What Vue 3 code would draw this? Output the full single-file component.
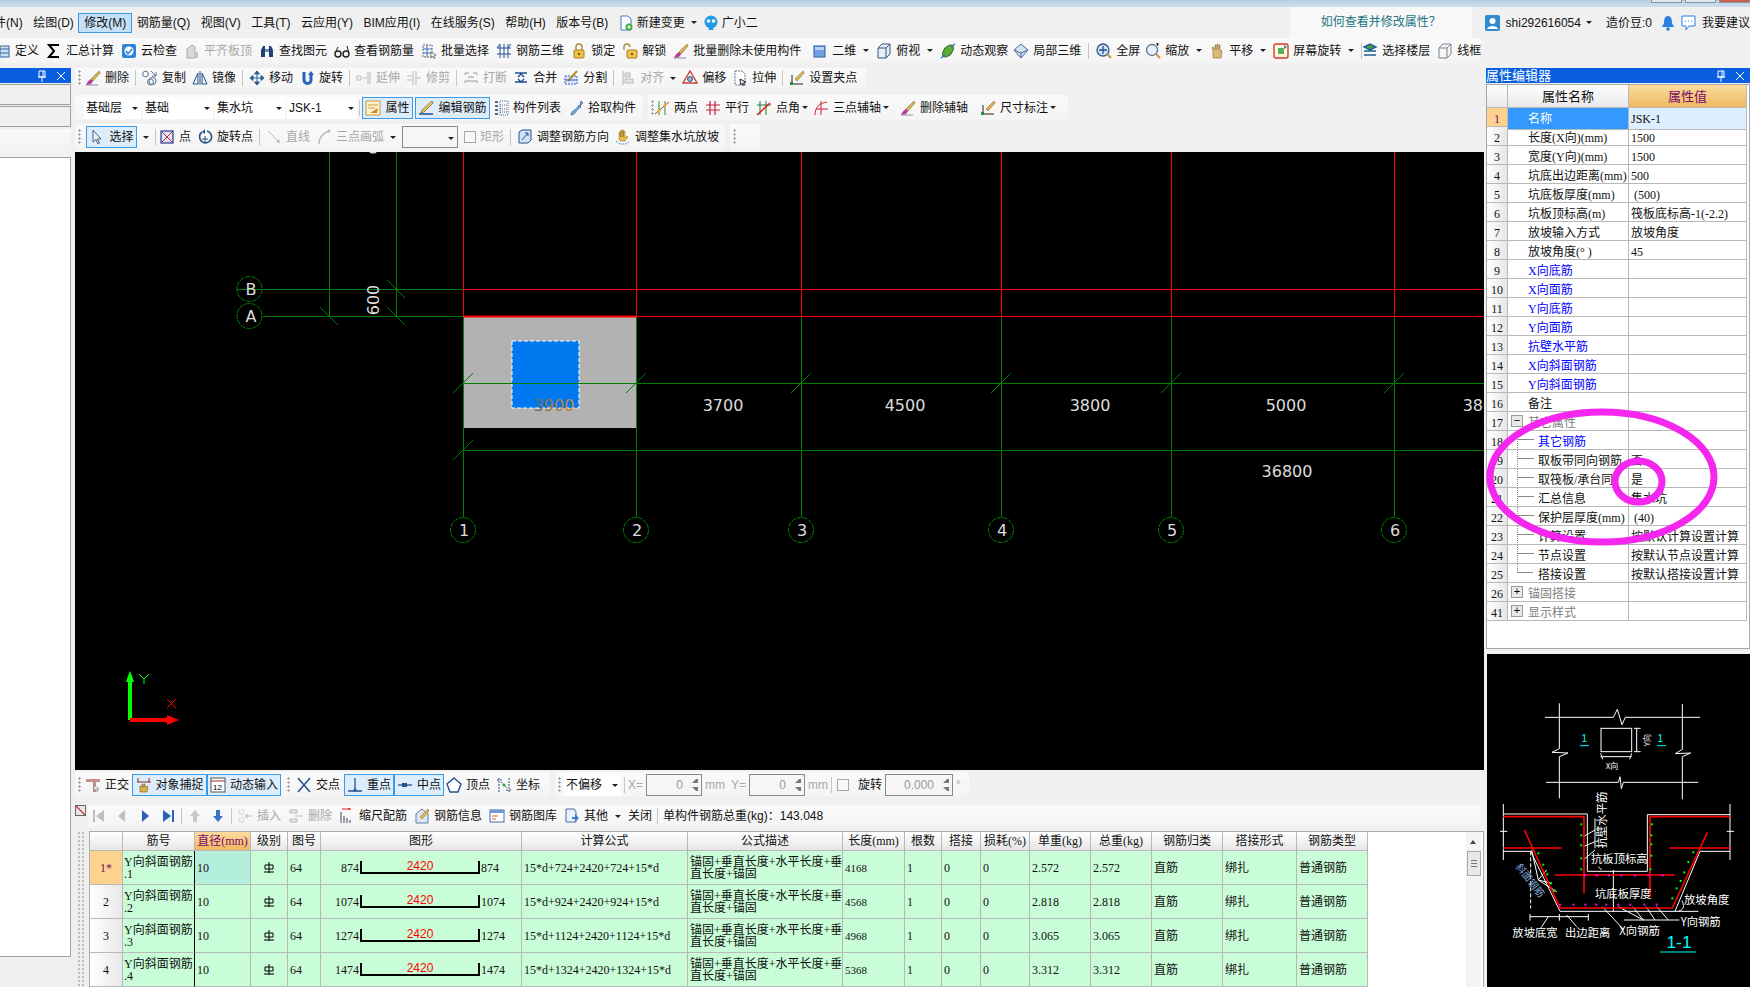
<script setup>
// glodon-style rebar editor: toolbars, cad canvas, property grid, rebar table
const icons = {
  doc: '<path d="M3 1h7l3 3v11H3z" fill="#fff" stroke="#3a7bc8"/><circle cx="11" cy="12" r="3.5" fill="#3fae3f"/><path d="M9 12h4M11 10v4" stroke="#fff"/>',
  bot: '<circle cx="8" cy="7" r="6.5" fill="#1f9be8"/><circle cx="5.5" cy="6" r="1.8" fill="#fff"/><circle cx="10.5" cy="6" r="1.8" fill="#fff"/><path d="M5 15h6l-3-4z" fill="#1f9be8"/>',
  define: '<rect x="1" y="3" width="13" height="11" fill="#cfe0f2" stroke="#35699f"/><path d="M1 6h13M5 3v11M1 10h13" stroke="#35699f"/>',
  sigma: '<path d="M13 2H3l5 6-5 6h10" fill="none" stroke="#000" stroke-width="2"/>',
  check: '<rect x="1" y="1" width="14" height="14" rx="2" fill="#2b86d8"/><circle cx="8" cy="8" r="4.5" fill="#fff"/><path d="M5 8l2 3 4-5" fill="none" stroke="#2b86d8" stroke-width="1.6"/>',
  level: '<path d="M3 15V6l5-4 3 2v11z" fill="#d8d8d8" stroke="#a8a8a8"/><path d="M10 15V9h4v6z" fill="#c4c4c4"/>',
  binoc: '<path d="M2 14V7l2-4h2v11zM10 14V3h2l2 4v7z" fill="#223f70"/><path d="M6 6h4v3H6z" fill="#6f89b0"/>',
  glasses: '<circle cx="4" cy="11" r="3" fill="none" stroke="#222" stroke-width="1.4"/><circle cx="12" cy="11" r="3" fill="none" stroke="#222" stroke-width="1.4"/><path d="M1 10l3-6M15 10l-2-7" stroke="#222"/>',
  batch: '<path d="M2 2h9v12H2z" fill="none" stroke="#667" stroke-dasharray="2 1"/><path d="M2 6h9M2 10h9M6 2v12" stroke="#3a6fb0"/><path d="M10 9l5 3-2 1 1 2-1 .5-1-2-2 1z" fill="#fff" stroke="#333" stroke-width=".6"/>',
  bars3d: '<path d="M1 5h14M1 11h14M4 1v14M8 1v14M12 1v14" stroke="#27518f"/><path d="M1 5l3-4M12 5l3-4" stroke="#27518f"/>',
  lock: '<path d="M5 7V4a3 3 0 016 0v3" fill="none" stroke="#a88a3c" stroke-width="1.4"/><rect x="3" y="7" width="10" height="8" rx="1" fill="#f0c24a" stroke="#a57c1e"/><circle cx="8" cy="11" r="1.2" fill="#7a5a10"/>',
  unlock: '<path d="M2 7V4a3 3 0 016 0" fill="none" stroke="#a88a3c" stroke-width="1.4"/><rect x="5" y="7" width="10" height="8" rx="1" fill="#f0c24a" stroke="#a57c1e"/><circle cx="10" cy="11" r="1.2" fill="#7a5a10"/>',
  brush: '<path d="M14 1L6 9l2 2 7-8z" fill="#d8b84a" stroke="#7a6a30" stroke-width=".6"/><path d="M6 9c-2 1-4 3-5 6 3 0 6-1 7-4z" fill="#b83a9a"/><path d="M1 15h12" stroke="#8a8aa0"/>',
  sq: '<rect x="2" y="3" width="11" height="11" fill="#6f9fe0" stroke="#2f5fa8"/><path d="M3 4h9v3H3z" fill="#b7d0f2"/>',
  cube: '<path d="M2 5l4-4h8v10l-4 4H2z" fill="#e8eef6" stroke="#33527c"/><path d="M2 5h8v10M10 5l4-4" fill="none" stroke="#33527c"/>',
  orbit: '<ellipse cx="8" cy="8" rx="4" ry="7" transform="rotate(40 8 8)" fill="#58ad3a" stroke="#2d6a1e"/><path d="M1 15l4-3M11 4l4-3" stroke="#2b74b8" stroke-width="1.4"/>',
  cube3: '<path d="M8 1l7 6-7 8-7-8z" fill="#d6e2f2" stroke="#47699a"/><path d="M1 7l7 3 7-3M8 10v5" fill="none" stroke="#47699a"/>',
  zall: '<circle cx="7" cy="7" r="6" fill="#d3e4f7" stroke="#33598e" stroke-width="1.3"/><path d="M7 3v8M3 7h8" stroke="#274f86" stroke-width="1.3"/><path d="M11 11l4 4" stroke="#c9952f" stroke-width="2"/>',
  zlens: '<circle cx="7" cy="7" r="5.5" fill="#e8f1fa" stroke="#5a7390" stroke-width="1.3"/><path d="M11 11l4 4" stroke="#c9952f" stroke-width="2"/><path d="M11 1h3M12.5 0v3" stroke="#222"/>',
  hand: '<path d="M4 15V8L3 5l1-1 2 3V2h1v4h1V1h1v5h1V2h1v6l1-1 1 1-1 7z" fill="#d9b87c" stroke="#8a6a30" stroke-width=".6"/>',
  rot: '<rect x="1" y="1" width="14" height="14" rx="2" fill="#fff7d8" stroke="#d23a2a" stroke-width="1.4"/><path d="M5 5h6v6H5z" fill="#54b060"/><path d="M11 2l3 2-3 2" fill="#2d7fd0"/>',
  floors: '<path d="M2 4l6-3 6 3-6 3zM2 8h12M2 12h12" fill="#4f9a52" stroke="#1e5f92" stroke-width="1.4"/>',
  wire: '<path d="M2 5l4-4h8v10l-4 4H2zM2 5h8v10M10 5l4-4" fill="none" stroke="#77828e"/>',
  copy: '<circle cx="3.5" cy="4" r="2.8" fill="none" stroke="#55708e"/><circle cx="10.5" cy="11" r="3.6" fill="none" stroke="#55708e"/><circle cx="8.5" cy="12" r="3" fill="none" stroke="#55708e"/><path d="M9 1l5 5M14 2v4h-4" fill="none" stroke="#55708e"/>',
  mirror: '<path d="M8 1v14" stroke="#24508a"/><path d="M6 3L1 14h5zM10 3l5 11h-5z" fill="#eef3f8" stroke="#24508a"/>',
  move: '<path d="M8 1v14M1 8h14M8 1L5.5 4h5zM8 15l-2.500-3h5zM1 8l3-2.500v5zM15 8l-3-2.500v5z" fill="#2e5f94" stroke="#2e5f94"/>',
  turn: '<path d="M5 2v8a3.500 3.500 0 007 0V5" fill="none" stroke="#2a62bb" stroke-width="3"/><path d="M12 1l3 4H9z" fill="#2a62bb"/>',
  ext: '<path d="M1 6h4v4H1zM7 8h4M12 2v12M14 2v12" fill="none" stroke="#b8b8b8"/>',
  trim: '<path d="M7 1v14M10 1v14M1 6h5M1 10h5M11 8h4" fill="none" stroke="#b8b8b8"/>',
  brk: '<path d="M2 3h4M10 3h4M2 3v2M14 3v2M2 11h12M2 11v2M14 11v2M5 7h6" fill="none" stroke="#b8b8b8" stroke-width="1.4"/>',
  merge: '<path d="M2 3h12M2 12h12M5 7l3-3 3 3M5 9l3 3 3-3" fill="none" stroke="#1c4f90" stroke-width="1.4"/>',
  split: '<path d="M2 6h12v8H2z" fill="#dfeafa" stroke="#2a5fd0" stroke-dasharray="2 1"/><path d="M5 11L14 1" stroke="#b8921e" stroke-width="2"/><path d="M2 10h12" stroke="#2a5fd0"/>',
  align: '<path d="M3 1v14" stroke="#b0b0b0"/><path d="M5 3h5v4H5zM5 9h8v4H5z" fill="#e4e4e4" stroke="#b8b8b8"/>',
  offset: '<path d="M8 1l7 12H1z" fill="#fff" stroke="#c8413a" stroke-width="1.4"/><circle cx="8" cy="9" r="2.500" fill="#9bb4d0" stroke="#33527c"/>',
  stretch: '<path d="M3 1h7l3 3v11H3z" fill="#fff" stroke="#55708e" stroke-dasharray="2 1"/><path d="M8 9l6 3-2.500 1 1 2-1 .5-1-2-2 1z" fill="#e8eef6" stroke="#223"/>',
  grip: '<path d="M14 1L6 9l2 2 7-8z" fill="#e0b94a" stroke="#7a6a30" stroke-width=".6"/><path d="M1 14h13M3 5v9" stroke="#222"/><rect x="1" y="12" width="3" height="3" fill="#1c8f3a"/>',
  prop: '<rect x="1" y="1" width="14" height="14" fill="#fff3cf" stroke="#c99a3a"/><path d="M3 5h10M3 8h7" stroke="#c99a3a"/><path d="M5 13l8-5-1 5z" fill="#c98a20"/>',
  edit: '<path d="M1 14h14" stroke="#1e4f8f" stroke-width="1.5"/><path d="M14 1L4 10l-1 3 3-1L15 3z" fill="#ecc466" stroke="#6a5a20" stroke-width=".7"/>',
  list: '<path d="M2 2h3M2 6h3M2 10h3M2 14h3" stroke="#4e6a8a" stroke-width="2"/><path d="M7 1h8v14H7zM7 5h8M7 9h8M7 12h8" fill="none" stroke="#4e6a8a" stroke-dasharray="1 1"/>',
  pick: '<path d="M13 1l2 2-3 3 1 1-2 1-5 6-3 1 1-3 6-5 1-2 1 1z" fill="#7fb5e8" stroke="#24508a" stroke-width=".7"/>',
  two: '<path d="M1 14L15 2" stroke="#d22"/><path d="M5 1v14M11 1v14" stroke="#1c8f3a"/><circle cx="5" cy="11" r="1.500" fill="#e8b030"/><circle cx="11" cy="5" r="1.500" fill="#e8b030"/>',
  par: '<path d="M5 1v14M10 1v14M1 5h14M1 10h14" stroke="#c81e3a" stroke-width="1.2"/>',
  ang: '<path d="M4 1v14M10 1v14M1 5h14" stroke="#1c7f3a"/><path d="M1 15L14 3" stroke="#d22" stroke-width="1.5"/>',
  arc3: '<path d="M2 15C2 8 6 3 14 2" fill="none" stroke="#d22"/><path d="M8 1v14M3 9h12" stroke="#c81e3a"/>',
  cursor: '<path d="M4 1v12l3-2.500 2 4.500 1.500-.7-2-4.300H12z" fill="#e6eefa" stroke="#51657e"/>',
  dot: '<rect x="2" y="2" width="12" height="12" fill="#dde6f6" stroke="#2a3a8a" stroke-width="1.2"/><path d="M3 3l10 10M13 3L3 13" stroke="#c8242a"/>',
  rotp: '<path d="M5 3a6 6 0 105-1" fill="none" stroke="#27517f" stroke-width="1.6"/><path d="M8 0v5l-3-2z" fill="#27517f"/><path d="M8 7v6M5 10h6" stroke="#27517f"/>',
  line: '<path d="M2 2l11 11" stroke="#b8b8b8"/><path d="M14 14l-4-1 3-3z" fill="#b8b8b8"/>',
  arc: '<path d="M3 15C3 8 7 4 13 2" fill="none" stroke="#b8b8b8" stroke-width="1.5"/><circle cx="13" cy="2" r="1.500" fill="#b8b8b8"/>',
  dir: '<path d="M2 3l3-2h9v10l-3 3H2z" fill="#d2e2f6" stroke="#29518c"/><path d="M5 11l6-7M8 4h3v3" fill="none" stroke="#29518c"/>',
  slope: '<path d="M4 10V3h1.500v5V1.500H7V8V1h1.500v7V2H10v7l2-2 1 1-3 4H5z" fill="#eac04c" stroke="#8a6a1c" stroke-width=".5"/><path d="M1 12l4 3h6l4-3" fill="none" stroke="#2a6fd0" stroke-dasharray="1 1"/>',
  ortho: '<path d="M1 2h14v3h-4v10H8V5H1z" fill="#c98f8a"/><path d="M9 8v6l2-1.500 1 2 1-.5-1-2h2z" fill="#f4f4f4" stroke="#555" stroke-width=".5"/>',
  snap: '<path d="M2 1v4M13 1v4M1 5h14" stroke="#8a2a2a"/><path d="M4 15V9l2 1V7h1v3h1V7h1v3h1l1-1 1 1-1 5z" fill="#dcb04a" stroke="#7a5a1c" stroke-width=".6"/>',
  dyn: '<rect x="1" y="1" width="14" height="14" fill="#fff" stroke="#555"/><path d="M1 4h14" stroke="#a02a2a"/><text x="3" y="13" font-size="8" font-family="Liberation Sans">12</text>',
  cross: '<path d="M2 1l12 14M14 1L2 15" stroke="#1c4f90" stroke-width="1.5"/>',
  perp: '<path d="M8 1v13M1 14h14" stroke="#27518f" stroke-width="1.3"/><circle cx="8" cy="13" r="1.500" fill="#27518f"/>',
  mid: '<path d="M1 8h14" stroke="#27518f" stroke-width="1.3"/><rect x="5" y="6" width="5" height="4" fill="#27518f"/>',
  vert: '<path d="M8 1l7 6-3 8H4L1 7z" fill="#fff" stroke="#27518f" stroke-width="1.4"/>',
  coord: '<path d="M3 1v14M13 1v14M1 3h5M10 13h5M5 5l6 6" stroke="#27518f" stroke-dasharray="2 1"/><circle cx="8" cy="8" r="1.500" fill="#2aa33a"/>',
  first: '<path d="M3 2v12" stroke="#bdbdc8" stroke-width="2"/><path d="M13 2v12L5 8z" fill="#bdbdc8"/>',
  prev: '<path d="M11 2v12L4 8z" fill="#bdbdc8"/>',
  next: '<path d="M5 2v12l7-6z" fill="#2a62bb"/>',
  last: '<path d="M13 2v12" stroke="#2a62bb" stroke-width="2"/><path d="M3 2v12l8-6z" fill="#2a62bb"/>',
  up: '<path d="M8 2l5 6h-3v6H6V8H3z" fill="#c8c8c8"/>',
  down: '<path d="M8 14l5-6h-3V2H6v6H3z" fill="#3a72c8"/>',
  ins: '<path d="M2 2h5v4H2zM2 10h5v4H2z" fill="none" stroke="#bbb" stroke-dasharray="1 1"/><path d="M8 8h7M11 6l-3 2 3 2" fill="none" stroke="#bbb"/>',
  del: '<path d="M2 2h7v3H2zM2 11h7v3H2z" fill="#e4e4e4" stroke="#bbb"/><path d="M7 8h8" stroke="#bbb"/>',
  scale: '<path d="M2 4v11M5 8v7M8 10v5M11 12v3" stroke="#445"/><path d="M3 1h9" stroke="#d22"/><path d="M12 1l-3-1v2z" fill="#d22"/>',
  info: '<path d="M2 6l6-5 6 5v9H2z" fill="#dbe6f2" stroke="#5a7da8"/><path d="M14 1L6 9l2 2 7-8z" fill="#e8b84a" stroke="#7a5a20" stroke-width=".5"/>',
  lib: '<rect x="1" y="2" width="14" height="12" fill="#fff" stroke="#3f6ea8"/><path d="M1 2h14v3H1z" fill="#6a9ad8"/><path d="M3 8h6M3 11h4" stroke="#c8652a"/>',
  other: '<path d="M2 1h8l2 3v10H2z" fill="#eaf1fa" stroke="#3f6ea8"/><path d="M8 9h3V6l4 4-4 4v-3H8z" fill="#3a7ad0"/>',
  user: '<rect x="0" y="0" width="15" height="16" rx="2" fill="#2f8ad0"/><circle cx="7.500" cy="6" r="3" fill="#fff"/><path d="M2 14c1-4 10-4 11 0z" fill="#fff"/>',
  bell: '<path d="M8 1c-3 0-4 3-4 7l-2 4h12l-2-4c0-4-1-7-4-7z" fill="#2b7fe0"/><circle cx="8" cy="14" r="1.800" fill="#2b7fe0"/>',
  chat: '<path d="M1 1h13v10H8l-3 4v-4H1z" fill="#fff" stroke="#2b7fe0"/><path d="M4 6h1M7 6h1M10 6h1" stroke="#2b7fe0"/>'
}

const t = (text, ic, extra = {}) => ({ t: text, ic, ...extra })
const sep = { k: 'sep' }
const hd = { k: 'hd' }
const car = { k: 'car' }

const toolRow = { id: 'top', bars: [{ items: [
  t('定义', 'define', { ml: -5 }), t('汇总计算', 'sigma'), t('云检查', 'check'), t('平齐板顶', 'level', { dis: 1 }),
  t('查找图元', 'binoc'), t('查看钢筋量', 'glasses'), t('批量选择', 'batch'), t('钢筋三维', 'bars3d'),
  t('锁定', 'lock'), t('解锁', 'unlock'), t('批量删除未使用构件', 'brush'),
  t('二维', 'sq', { ml: 4 }), car, t('俯视', 'cube'), car, t('动态观察', 'orbit'), t('局部三维', 'cube3', { ml: -2 }), sep,
  t('全屏', 'zall'), t('缩放', 'zlens', { ml: -2 }), car, t('平移', 'hand'), car, t('屏幕旋转', 'rot'), car, sep,
  t('选择楼层', 'floors', { ml: -7 }), t('线框', 'wire')
] }] }

const centerRows = [
  { id: 'edit', bars: [{ w: 791, items: [
    hd, t('删除', 'brush', { ml: -2 }), sep, t('复制', 'copy'), t('镜像', 'mirror'), sep, t('移动', 'move'), t('旋转', 'turn'), sep,
    t('延伸', 'ext', { dis: 1 }), t('修剪', 'trim', { dis: 1 }), sep, t('打断', 'brk', { dis: 1 }), t('合并', 'merge'), t('分割', 'split'), sep,
    t('对齐', 'align', { dis: 1 }), car, t('偏移', 'offset'), t('拉伸', 'stretch'), sep, t('设置夹点', 'grip')
  ] }] },
  { id: 'pick', bars: [
    { w: 568, items: [
      { k: 'sel', t: '基础层', w: 57 }, { k: 'sel', t: '基础', w: 70 }, { k: 'sel', t: '集水坑', w: 70 }, { k: 'sel', t: 'JSK-1', w: 70 }, sep,
      t('属性', 'prop', { on: 1, w: 51 }), t('编辑钢筋', 'edit', { on: 1, w: 75 }), t('构件列表', 'list', { ml: 1 }), t('拾取构件', 'pick')
    ] },
    { w: 420, items: [
      hd, t('两点', 'two', { ml: -2 }), t('平行', 'par'), t('点角', 'ang'), car, t('三点辅轴', 'arc3', { ml: 3 }), car, t('删除辅轴', 'brush', { ml: 9 }), t('尺寸标注', 'grip', { ml: 10 }), car
    ] }
  ] },
  { id: 'draw', bars: [
    { w: 650, items: [
      hd, t('选择', 'cursor', { on: 1, w: 51, ml: -1 }), car, sep, t('点', 'dot', { ml: -3 }), t('旋转点', 'rotp'), sep,
      t('直线', 'line', { dis: 1 }), t('三点画弧', 'arc', { dis: 1 }), car, { k: 'inp', t: '', w: 56 },
      t('矩形', '', { dis: 1, box: 1 }), sep, t('调整钢筋方向', 'dir'), t('调整集水坑放坡', 'slope')
    ] },
    { w: 30, items: [hd] }
  ] },
  { id: 'canvas' },
  { id: 'snap', bars: [
    { w: 475, items: [
      hd, t('正交', 'ortho', { ml: -2 }), t('对象捕捉', 'snap', { on: 1, w: 75, ml: -3 }), t('动态输入', 'dyn', { on: 1, w: 74, ml: -6 }), hd,
      t('交点', 'cross'), t('重点', 'perp', { on: 1, w: 50, ml: -2 }), t('中点', 'mid', { on: 1, w: 50, ml: -6 }), t('顶点', 'vert', { ml: -4 }), t('坐标', 'coord')
    ] },
    { w: 414, items: [
      hd, { k: 'sel', t: '不偏移', w: 57 }, sep, { k: 'lab', t: 'X=', dis: 1 }, { k: 'inp', t: '0', w: 56, spin: 1 }, { k: 'lab', t: 'mm', dis: 1 },
      { k: 'lab', t: 'Y=', dis: 1, ml: 3 }, { k: 'inp', t: '0', w: 56, spin: 1 }, { k: 'lab', t: 'mm', dis: 1 }, sep, { k: 'chk', ml: 2 },
      { k: 'lab', t: '旋转', ml: 6 }, { k: 'inp', t: '0.000', w: 68, spin: 1 }, { k: 'lab', t: '°', dis: 1 }
    ] }
  ] },
  { id: 'rebar', bars: [{ w: 1392, items: [
    t('', 'first', { dis: 1 }), t('', 'prev', { dis: 1 }), t('', 'next'), t('', 'last'), sep, t('', 'up'), t('', 'down'), sep,
    t('插入', 'ins', { dis: 1 }), t('删除', 'del', { dis: 1 }), t('缩尺配筋', 'scale'), t('钢筋信息', 'info'), t('钢筋图库', 'lib'), t('其他', 'other'), car,
    { k: 'lab', t: '关闭' }, sep, { k: 'lab', t: '单构件钢筋总重(kg)：143.048' }
  ] }] },
  { id: 'table' }
]

const menus = ['件(N)', '绘图(D)', '修改(M)', '钢筋量(Q)', '视图(V)', '工具(T)', '云应用(Y)', 'BIM应用(I)', '在线服务(S)', '帮助(H)', '版本号(B)']

const props = [
  { n: 1, a: '名称', v: 'JSK-1' },
  { n: 2, a: '长度(X向)(mm)', v: '1500' },
  { n: 3, a: '宽度(Y向)(mm)', v: '1500' },
  { n: 4, a: '坑底出边距离(mm)', v: '500' },
  { n: 5, a: '坑底板厚度(mm)', v: ' (500)' },
  { n: 6, a: '坑板顶标高(m)', v: '筏板底标高-1(-2.2)' },
  { n: 7, a: '放坡输入方式', v: '放坡角度' },
  { n: 8, a: '放坡角度(° )', v: '45' },
  { n: 9, a: 'X向底筋', c: 'link' },
  { n: 10, a: 'X向面筋', c: 'link' },
  { n: 11, a: 'Y向底筋', c: 'link' },
  { n: 12, a: 'Y向面筋', c: 'link' },
  { n: 13, a: '抗壁水平筋', c: 'link' },
  { n: 14, a: 'X向斜面钢筋', c: 'link' },
  { n: 15, a: 'Y向斜面钢筋', c: 'link' },
  { n: 16, a: '备注' },
  { n: 17, a: '其它属性', c: 'group', box: '−' },
  { n: 18, a: '其它钢筋', c: 'link', sub: 1 },
  { n: 19, a: '取板带同向钢筋', v: '否', sub: 1 },
  { n: 20, a: '取筏板/承台同', v: '是', sub: 1 },
  { n: 21, a: '汇总信息', v: '集水坑', sub: 1 },
  { n: 22, a: '保护层厚度(mm)', v: ' (40)', sub: 1 },
  { n: 23, a: '计算设置', v: '按默认计算设置计算', sub: 1 },
  { n: 24, a: '节点设置', v: '按默认节点设置计算', sub: 1 },
  { n: 25, a: '搭接设置', v: '按默认搭接设置计算', sub: 1, end: 1 },
  { n: 26, a: '锚固搭接', c: 'group', box: '+' },
  { n: 41, a: '显示样式', c: 'group', box: '+' }
]

const cols = ['', '筋号', '直径(mm)', '级别', '图号', '图形', '计算公式', '公式描述', '长度(mm)', '根数', '搭接', '损耗(%)', '单重(kg)', '总重(kg)', '钢筋归类', '搭接形式', '钢筋类型']
const rebars = [
  { no: '1*', name: 'Y向斜面钢筋\n.1', end: 874, f: '15*d+724+2420+724+15*d', len: 4168, w: '2.572' },
  { no: '2', name: 'Y向斜面钢筋\n.2', end: 1074, f: '15*d+924+2420+924+15*d', len: 4568, w: '2.818' },
  { no: '3', name: 'Y向斜面钢筋\n.3', end: 1274, f: '15*d+1124+2420+1124+15*d', len: 4968, w: '3.065' },
  { no: '4', name: 'Y向斜面钢筋\n.4', end: 1474, f: '15*d+1324+2420+1324+15*d', len: 5368, w: '3.312' }
]

// cad canvas, page coordinates
const axisX = [
  { x: 463, n: '1' }, { x: 636, n: '2' }, { x: 801, n: '3' },
  { x: 1001, n: '4' }, { x: 1171, n: '5' }, { x: 1394, n: '6' }
]
const dims = [
  { x: 723, t: '3700' }, { x: 905, t: '4500' }, { x: 1090, t: '3800' }, { x: 1286, t: '5000' }, { x: 1483, t: '3800' }
]
const greenDots = [[304, 523], [304, 556], [304, 586], [304, 625], [304, 658], [516, 523], [514, 556], [514, 583], [514, 617], [511, 658], [175, 610], [190, 644], [202, 673], [213, 700], [223, 723], [640, 607], [625, 636], [613, 667], [602, 693], [590, 715], [577, 745]]
const pinkDots = [[240, 764], [280, 764], [316, 764], [349, 764], [379, 764], [415, 764], [451, 764], [493, 764], [530, 764], [315, 676], [350, 676], [387, 676], [424, 676], [465, 676], [505, 676], [548, 676]]
</script>

<template>
  <div class="app">
    <div class="titlebar">
      <i class="win-btn"></i>
      <i class="win-btn"></i>
      <i class="win-btn close"></i>
    </div>
    <div class="menubar">
      <span v-for="m in menus" :key="m" class="menu" :class="{ active: m === '修改(M)' }">{{ m }}</span>
      <span class="menu-tool"><svg class="ic" viewBox="0 0 16 16" v-html="icons.doc"></svg>新建变更</span>
      <i class="caret menu-caret"></i>
      <span class="menu-tool bot"><svg class="ic" viewBox="0 0 16 16" v-html="icons.bot"></svg>广小二</span>
      <span class="help">如何查看并修改属性？</span>
      <span class="account">
        <svg class="ic" viewBox="0 0 16 16" v-html="icons.user"></svg>
        <span>shi292616054</span><i class="caret"></i>
        <span class="beans">造价豆:0</span>
        <svg class="ic" viewBox="0 0 16 16" v-html="icons.bell"></svg>
        <svg class="ic" viewBox="0 0 16 16" v-html="icons.chat"></svg>
        <span>我要建议</span>
      </span>
    </div>

    <div class="workspace">
      <template v-for="row in [toolRow, ...centerRows]" :key="row.id">
        <div v-if="row.id === 'canvas'" class="canvas">
          <svg width="1409" height="618" viewBox="75 152 1409 618">
            <defs>
              <linearGradient id="faded" x1="0" x2="1" y1="0" y2="0">
                <stop offset="0" stop-color="#666" />
                <stop offset="1" stop-color="#d98a2a" />
              </linearGradient>
            </defs>
            <rect x="463" y="316" width="173" height="112" fill="#b2b2b2" />
            <rect x="512" y="341" width="67" height="67" fill="#0078f0" stroke="#fff" stroke-dasharray="4 2" />

            <g stroke="#008000" fill="none">
              <path d="M329.500 152V316M396.500 152V316" />
              <path d="M237 289.500H463M263 316.500H463" />
              <path d="M463.500 316V517M636.500 316V517M801.500 316V517M1001.500 316V517M1171.500 316V517M1394.500 316V517" />
              <path d="M463 383.500H1484M463 450.500H1484" />
              <path d="M320 307l18 18M387 307l18 18M387 280l18 18" />
              <path v-for="a in axisX" :key="a.x" :d="`M${a.x - 10} 393l20-20`" />
              <path d="M453 460l20-20" />
              <circle cx="249.500" cy="289" r="12.500" stroke-dasharray="5 1" />
              <circle cx="249.500" cy="316" r="12.500" stroke-dasharray="5 1" />
              <circle v-for="a in axisX" :key="a.x" :cx="a.x" cy="530" r="12.500" stroke-dasharray="5 1" />
            </g>
            <g stroke="#f00" fill="none">
              <path d="M463.500 152V316M636.500 152V316M801.500 152V316M1001.500 152V316M1171.500 152V316M1394.500 152V316" />
              <path d="M463 289.500H1484M463 316.500H1484" />
              <path d="M463 316.500H636" stroke-width="2" />
            </g>

            <g class="cad-text">
              <text x="251" y="295" text-anchor="middle">B</text>
              <text x="251" y="322" text-anchor="middle">A</text>
              <text v-for="a in axisX" :key="a.x" :x="a.x + 1" y="536" text-anchor="middle">{{ a.n }}</text>
              <text v-for="d in dims" :key="d.x" :x="d.x" y="411" text-anchor="middle">{{ d.t }}</text>
              <text x="1287" y="477" text-anchor="middle">36800</text>
              <text transform="translate(379 300) rotate(-90)" text-anchor="middle">600</text>
              <text x="554" y="411" text-anchor="middle" class="faded">3900</text>
            </g>
            <ellipse cx="373" cy="151" rx="4" ry="2.500" fill="#ddd" />

            <path d="M128 720V682H126L128 676 130 671 132 676 134 682H132V720z" fill="#0f0" />
            <path d="M130 718H167V715L179 720 167 725V722H130z" fill="#f00" />
            <path d="M139 674l5 5 5-5M144 679v5" stroke="#0f0" fill="none" />
            <path d="M167 699l9 9M176 699l-9 9" stroke="#f00" fill="none" />
          </svg>
        </div>

        <div v-else-if="row.id === 'table'" class="table-row">
          <div class="dots"></div>
          <div class="rebar-frame">
            <div class="rebar-grid">
              <div v-for="(c, i) in cols" :key="'h' + i" class="rb-head" :class="{ cur: i === 2 }">{{ c }}</div>
              <template v-for="(r, i) in rebars" :key="r.no">
                <div class="rb-no" :class="{ cur: i === 0 }">{{ r.no }}</div>
                <div class="rb name">{{ r.name }}</div>
                <div class="rb dia" :class="{ cur: i === 0 }">10</div>
                <div class="rb center">
                  <svg width="12" height="12" viewBox="0 0 12 12"><path d="M6 0v11M2 3h8v4H2zM1 10h10" fill="none" stroke="#000" /></svg>
                </div>
                <div class="rb">64</div>
                <div class="rb shape">
                  <span class="end left">{{ r.end }}</span>
                  <span class="bracket">2420</span>
                  <span class="end">{{ r.end }}</span>
                </div>
                <div class="rb">{{ r.f }}</div>
                <div class="rb desc">{{ '锚固+垂直长度+水平长度+垂\n直长度+锚固' }}</div>
                <div class="rb small">{{ r.len }}</div>
                <div class="rb">1</div>
                <div class="rb">0</div>
                <div class="rb">0</div>
                <div class="rb">{{ r.w }}</div>
                <div class="rb">{{ r.w }}</div>
                <div class="rb">直筋</div>
                <div class="rb">绑扎</div>
                <div class="rb">普通钢筋</div>
              </template>
            </div>
            <div class="scrollbar">
              <i class="up-arrow"></i>
              <div class="thumb"></div>
            </div>
          </div>
        </div>

        <div v-else class="row" :class="'row-' + row.id">
          <i v-if="row.id === 'rebar'" class="mini-close"></i>
          <div
            v-for="(bar, bi) in row.bars"
            :key="bi"
            class="bar"
            :style="bar.w ? { width: bar.w + 'px' } : null"
          >
            <template v-for="(it, ii) in bar.items" :key="ii">
              <i v-if="it.k === 'sep'" class="sep"></i>
              <i v-else-if="it.k === 'hd'" class="handle"></i>
              <i v-else-if="it.k === 'car'" class="caret"></i>
              <i v-else-if="it.k === 'chk'" class="chk" :style="{ marginLeft: it.ml ? it.ml + 'px' : null }"></i>
              <span
                v-else-if="it.k === 'lab'"
                class="lab"
                :class="{ dis: it.dis }"
                :style="{ marginLeft: it.ml ? it.ml + 'px' : null }"
              >{{ it.t }}</span>
              <span v-else-if="it.k === 'sel'" class="sel" :style="{ width: it.w + 'px' }">
                {{ it.t }}<i class="caret sel-caret"></i>
              </span>
              <span v-else-if="it.k === 'inp'" class="inp" :style="{ width: it.w + 'px' }">
                <span class="inp-val">{{ it.t }}</span>
                <i v-if="it.spin" class="spin"></i>
                <i v-else class="caret sel-caret"></i>
              </span>
              <span
                v-else
                class="tool"
                :class="{ dis: it.dis, on: it.on }"
                :style="{ marginLeft: it.ml ? it.ml + 'px' : null, width: it.w ? it.w + 'px' : null }"
              >
                <i v-if="it.box" class="chk"></i>
                <svg v-if="it.ic" class="ic" viewBox="0 0 16 16" v-html="icons[it.ic]"></svg>
                <span v-if="it.t">{{ it.t }}</span>
              </span>
            </template>
          </div>
        </div>
      </template>

      <aside class="panel-left">
        <div class="dock-head">
          <span></span>
          <span class="dock-btns">
            <svg width="10" height="12" viewBox="0 0 10 12"><path d="M2 1h6v6H2zM1 7h8M5 7v5M6 1v6" fill="none" stroke="#fff" /></svg>
            <svg width="10" height="10" viewBox="0 0 10 10"><path d="M1 1l8 8M9 1L1 9" stroke="#fff" /></svg>
          </span>
        </div>
        <div class="left-cell"></div>
        <div class="left-cell"></div>
        <div class="left-top"></div>
        <div class="left-list"></div>
      </aside>

      <aside class="panel-right">
        <div class="dock-head">
          <span>属性编辑器</span>
          <span class="dock-btns">
            <svg width="10" height="12" viewBox="0 0 10 12"><path d="M2 1h6v6H2zM1 7h8M5 7v5M6 1v6" fill="none" stroke="#fff" /></svg>
            <svg width="10" height="10" viewBox="0 0 10 10"><path d="M1 1l8 8M9 1L1 9" stroke="#fff" /></svg>
          </span>
        </div>
        <div class="prop-frame">
          <div class="prop-grid">
            <div class="p-head"></div>
            <div class="p-head">属性名称</div>
            <div class="p-head val">属性值</div>
            <template v-for="p in props" :key="p.n">
              <div class="p-no" :class="{ cur: p.n === 1 }">{{ p.n }}</div>
              <div class="p-name" :class="[p.c, { sel: p.n === 1, sub: p.sub }]">
                <i v-if="p.sub" class="tree" :class="{ end: p.end }"></i>
                <i v-if="p.box" class="expander">{{ p.box }}</i>
                {{ p.a }}
              </div>
              <div class="p-val" :class="{ sel: p.n === 1 }">{{ p.v }}</div>
            </template>
          </div>
        </div>
        <div class="preview">
          <svg width="263" height="333" viewBox="21 12 789 999">
            <g stroke="#fff" stroke-width="3" fill="none">
              <path d="M195 202H400L412 178 426 224 436 202H660M198 397H415L420 380 424 416 430 397H655" />
              <path d="M238 160V296L216 307 264 309 238 320V445M607 162V298L586 311 632 309 607 320V448" />
              <rect x="363" y="235" width="92" height="70" />
              <path d="M470 235V305M462 235H482M462 305H482M362 320H455M362 310L368 328M455 310L449 328" />
            </g>
            <g stroke="#0ff" stroke-width="3"><path d="M300 287H327M531 287H558M540 906H648" /></g>
            <g class="pv-cyan">
              <text x="313" y="276" text-anchor="middle">1</text>
              <text x="541" y="276" text-anchor="middle">1</text>
              <text x="597" y="893" text-anchor="middle" class="big">1-1</text>
            </g>
            <g stroke="#fff" stroke-width="3" fill="none">
              <path d="M70 462V630M60 544H82M70 492H322V664H502V494H750M750 462V630M740 544H762" />
              <path d="M70 604H152L240 784H655M585 784L660 604H750" />
              <path d="M152 604V775" stroke-dasharray="12 6" />
              <path d="M150 800H325M150 792V812M238 792V812M325 792V812" />
              <path d="M345 505V595M310 560L345 540M310 590L345 575M310 630L345 600M400 660V784M355 650L365 660" />
              <path d="M175 690L155 600M175 690L200 660M175 690L215 700M175 690L230 725" />
              <path d="M367 770L432 840M415 770L490 810M458 770L490 810M498 770L525 810M530 770L565 810M432 810H598M205 800L185 830M260 795L290 830" />
              <path d="M595 784C615 778 612 765 606 752" />
            </g>
            <g stroke="#f00" stroke-width="5" fill="none">
              <path d="M70 500H312V730M510 740V500H750M70 594H245M567 594H750M225 675H585" />
              <path d="M133 540L240 774H577L682 547" />
            </g>
            <g fill="#0f0"><rect v-for="(d, i) in greenDots" :key="i" :x="d[0] - 3" :y="d[1] - 3" width="6" height="6" /></g>
            <g fill="#f0f"><rect v-for="(d, i) in pinkDots" :key="i" :x="d[0] - 3" :y="d[1] - 3" width="6" height="6" /></g>
            <g class="pv-text">
              <text transform="translate(378 595) rotate(-90)">抗壁水平筋</text>
              <text x="333" y="640">抗板顶标高</text>
              <text x="345" y="743">坑底板厚度</text>
              <text x="612" y="762">放坡角度</text>
              <text x="602" y="828">Y向钢筋</text>
              <text x="97" y="860">放坡底宽</text>
              <text x="255" y="860">出边距离</text>
              <text x="418" y="856">X向钢筋</text>
              <text x="396" y="358" text-anchor="middle" class="tiny">X向</text>
              <text transform="translate(510 270) rotate(-90)" text-anchor="middle" class="tiny">Y向</text>
              <text transform="translate(105 650) rotate(52)" class="slant">斜面钢筋</text>
            </g>
          </svg>
        </div>
        <svg class="rings" width="264" height="581" viewBox="1486 68 264 581">
          <ellipse cx="1602" cy="477" rx="112" ry="65" fill="none" stroke="#f526ee" stroke-width="7" />
          <ellipse cx="1638.500" cy="481.500" rx="23.500" ry="20.500" fill="none" stroke="#f526ee" stroke-width="7" />
        </svg>
      </aside>
    </div>
  </div>
</template>

<style>
html, body { margin: 0; background: #f0f0f0; overflow: hidden; }
</style>

<style scoped>
.app {
  width: 1750px;
  height: 987px;
  overflow: hidden;
  background: #f0f0f0;
  color: #111;
  font: 12px/16px "Liberation Sans", "Noto Sans CJK SC", sans-serif;
}
i { font-style: normal; display: block; flex: none; }
.titlebar { height: 7px; background: linear-gradient(#b6cee4, #cfdeee); display: flex; justify-content: flex-end; gap: 3px; }
.win-btn { width: 31px; height: 3px; background: #dfe6ee; border: 1px solid #8a98a8; border-top: 0; box-sizing: border-box; }
.win-btn.close { background: #c8604f; }
.ic { width: 16px; height: 16px; flex: none; display: block; }

.menubar { height: 31px; display: flex; align-items: center; white-space: nowrap; }
.menu { padding: 0 5px; height: 18px; line-height: 18px; border: 1px solid transparent; margin-right: -1.5px; }
.menu:first-child { margin-left: -12px; }
.menu.active { background: #c6e0f8; border-color: #3a9be8; }
.menu-tool { display: flex; align-items: center; gap: 3px; margin-left: 5px; }
.menu-caret { margin-left: 6px; }
.bot { margin-left: 6px; }
.help { margin-left: 532px; width: 187px; height: 31px; line-height: 31px; text-align: center; background: #f8f8f8; color: #1b7585; }
.account { margin-left: 13px; display: flex; align-items: center; gap: 5px; height: 31px; }
.beans { margin: 0 3px 0 9px; }

.workspace {
  display: grid;
  grid-template-columns: 75px 1409px 266px;
  grid-template-rows: auto auto auto auto 618px auto auto 1fr;
  height: 949px;
}
.row { display: flex; grid-column: 2; gap: 5px; min-width: 0; }
.bar {
  display: flex;
  align-items: center;
  gap: 6px;
  padding: 0 5px;
  background: linear-gradient(#fafafa, #f4f4f4);
  border-radius: 2px;
  white-space: nowrap;
  flex: none;
  box-sizing: border-box;
}
.row-top { grid-column: 1 / -1; height: 25px; margin-bottom: 5px; }
.row-top .bar { padding: 0; gap: 7px; width: 1481px; overflow: hidden; }
.row-edit { height: 20px; margin-bottom: 7px; }
.row-pick { height: 25px; margin-bottom: 4px; }
.row-draw { height: 26px; margin-bottom: 2px; }
.row-snap { height: 25px; margin: 2px 0 8px; }
.row-rebar { height: 22px; margin-bottom: 4px; padding-left: 13px; position: relative; }
.row-rebar .bar { padding-left: 3px; gap: 7px; }
.row-rebar .sep { margin: 0 -2px; }
.row-draw .bar, .row-edit .bar, .row-snap .bar { padding-left: 3px; }
.row-pick .bar { gap: 2px; padding-left: 9px; }
.row-pick .bar + .bar { padding-left: 3px; }
.row-snap .bar + .bar { gap: 3px; }
.row-pick .tool:not(.on) { margin-left: 5px; }

.tool { display: flex; align-items: center; gap: 4px; height: 100%; flex: none; box-sizing: border-box; }
.tool.dis, .lab.dis { color: #a8a8a8; }
.tool.on {
  height: 22px;
  justify-content: center;
  background: #deedfb;
  outline: 1px solid #3a9be8;
  outline-offset: -1px;
}
.sep { width: 1px; height: 16px; background: #c6c6c6; }
.handle {
  width: 3px;
  height: 16px;
  background: radial-gradient(circle at 1.500px 1.500px, #aaa 1px, transparent 1.200px) 0 0 / 3px 4px;
}
.caret { width: 0; height: 0; border: 3px solid transparent; border-top: 3px solid #222; border-bottom: 0; }
.lab { flex: none; }
.chk { width: 10px; height: 10px; border: 1px solid #a8a8a8; background: #f8f8f8; }

.sel {
  position: relative;
  display: block;
  flex: none;
  height: 22px;
  line-height: 22px;
  padding-left: 2px;
  box-sizing: border-box;
  background: #fff;
}
.sel-caret { position: absolute; right: 3px; top: 10px; }
.inp {
  position: relative;
  display: block;
  flex: none;
  height: 22px;
  line-height: 20px;
  box-sizing: border-box;
  background: #f6f6f6;
  border: 1px solid #8a8a8a;
  color: #999;
}
.inp-val { position: absolute; right: 18px; }
.spin { position: absolute; right: 3px; top: 4px; width: 7px; height: 12px; background: linear-gradient(135deg, transparent 45%, #777 46%) 0 0 / 7px 4px no-repeat, linear-gradient(45deg, transparent 45%, #777 46%) 0 8px / 7px 4px no-repeat; }

.canvas { grid-column: 2; background: #000; overflow: hidden; }
.canvas svg { display: block; }
.cad-text text { font: 16px "DejaVu Sans", sans-serif; fill: #ddd; }
.cad-text text.faded { fill: url(#faded); }

.mini-close { position: absolute; left: 0; top: 0; width: 9px; height: 9px; border: 1px solid #666; background: linear-gradient(45deg, transparent 44%, #c33 45%, #c33 55%, transparent 56%), #e8e8e8; }
.table-row { grid-column: 2; display: flex; overflow: hidden; min-height: 0; }
.dots { width: 8px; margin: 0 4px 0 2px; flex: none; background: radial-gradient(circle at 2px 2px, #bbb 1px, transparent 1.200px) 0 0 / 4px 4px; }
.rebar-frame { flex: 1; display: flex; border: 1px solid #aaa; border-width: 1px 1px 0; background: #fff; box-sizing: border-box; min-width: 0; }
.rebar-grid {
  width: 1278px;
  height: 155px;
  flex: none;
  display: grid;
  grid-template-columns: 33px 72px 56px 37px 33px 201px 166px 155px 62px 37px 39px 49px 61px 61px 71px 74px 71px;
  grid-template-rows: 19px repeat(4, 34px);
  font: 12px/12px "Liberation Serif", "Noto Sans CJK SC", sans-serif;
}
.rb-head {
  display: flex;
  align-items: center;
  justify-content: center;
  white-space: nowrap;
  overflow: hidden;
  background: linear-gradient(#fff, #e6e6e6);
  border-right: 1px solid #b8b8b8;
  border-bottom: 1px solid #b8b8b8;
}
.rb-head.cur { background: linear-gradient(#fbdc9f, #efb85f); color: #7a0a6a; }
.rb-no {
  display: flex;
  align-items: center;
  justify-content: center;
  background: linear-gradient(90deg, #fff, #e8e8e8);
  border-right: 1px solid #b8b8b8;
  border-bottom: 1px solid #b8b8b8;
}
.rb-no.cur { background: #fdd28e; color: #7a0a6a; }
.rb {
  display: flex;
  align-items: center;
  padding-left: 2px;
  background: #c9fdd8;
  border-right: 1px solid #b8b8b8;
  border-bottom: 1px solid #b8b8b8;
  overflow: hidden;
  min-width: 0;
}
.rb.name { white-space: pre-line; padding-left: 1px; border-right-color: #000; }
.rb.dia.cur { background: #b4efdc; }
.rb.center { justify-content: center; padding: 0; }
.rb.desc { line-height: 12px; white-space: pre; }
.rb.small { font-size: 11px; }
.shape { padding: 0; align-items: center; }
.end { width: 39px; flex: none; padding-left: 1px; box-sizing: border-box; }
.end.left { text-align: right; padding: 0 1px 0 0; }
.bracket {
  width: 120px;
  height: 13px;
  flex: none;
  box-sizing: border-box;
  border: 2px solid #000;
  border-top: 0;
  color: #f00;
  text-align: center;
  line-height: 10px;
  font-family: "Liberation Sans", sans-serif;
}
.scrollbar { margin-left: 98px; width: 15px; flex: none; position: relative; background: #f4f4f4; }
.up-arrow { position: absolute; left: 4px; top: 8px; width: 0; height: 0; border: 3px solid transparent; border-top: 0; border-bottom: 4px solid #444; }
.thumb { position: absolute; top: 19px; left: 1px; width: 12px; height: 23px; background: repeating-linear-gradient(#777 0 1px, transparent 1px 3px) 3px 8px / 6px 7px no-repeat, #e8e8e8; border: 1px solid #a8a8a8; }

.panel-left, .panel-right { grid-row: 2 / 9; min-height: 0; }
.panel-left { grid-column: 1; width: 71px; display: flex; flex-direction: column; }
.panel-right { grid-column: 3; position: relative; margin-left: 2px; display: flex; flex-direction: column; }
.dock-head {
  height: 15px;
  background: #0a5fe0;
  color: #fff;
  display: flex;
  align-items: center;
  justify-content: space-between;
  line-height: 15px;
  padding-right: 5px;
  flex: none;
  font-size: 13px;
}
.dock-btns { display: flex; align-items: center; gap: 9px; }
.left-cell { height: 21px; margin-top: 1px; border: 1px solid #a0a0a0; border-left: 0; background: #f0f0f0; box-sizing: border-box; flex: none; }
.left-top { height: 28px; margin-top: 2px; background: linear-gradient(#fafafa, #f0f0f0); flex: none; }
.left-list { height: 800px; background: #fff; border: 1px solid #a0a0a0; border-left: 0; box-sizing: border-box; flex: none; }

.prop-frame { height: 565px; margin-top: 1px; flex: none; border: 1px solid #a8a8a8; box-sizing: border-box; background: #fff; }
.prop-grid {
  display: grid;
  grid-template-columns: 21px 121px 118px;
  grid-template-rows: 23px;
  grid-auto-rows: 19px;
  font: 12px/23px "Liberation Serif", "Noto Sans CJK SC", sans-serif;
}
.p-head {
  background: linear-gradient(#fff, #e8e8e8);
  border-right: 1px solid #b8b8b8;
  border-bottom: 1px solid #b8b8b8;
  text-align: center;
  line-height: 24px;
  font-size: 13px;
}
.p-head.val { background: linear-gradient(#fbdc9f, #efb85f); color: #7a0a6a; }
.p-no {
  background: linear-gradient(90deg, #fff, #e6e6e6);
  border-right: 1px solid #b8b8b8;
  border-bottom: 1px solid #b8b8b8;
  text-align: center;
  overflow: hidden;
}
.p-no.cur { background: #fdd28e; color: #7a0a6a; }
.p-name, .p-val {
  border-right: 1px solid #b8b8b8;
  border-bottom: 1px solid #b8b8b8;
  white-space: pre;
  overflow: hidden;
  position: relative;
}
.p-name { padding-left: 20px; white-space: nowrap; }
.p-name.sub { padding-left: 30px; }
.p-name.sel { background: #3399ff; color: #fff; }
.p-name.link { color: #0000ff; }
.p-name.group { color: #808080; }
.p-val { padding-left: 2px; }
.p-val.sel { background: #ddeeff; }
.tree { position: absolute; left: 9px; top: -1px; width: 16px; height: 20px; border-left: 1px dotted #888; background: linear-gradient(#888, #888) 0 9px / 16px 1px no-repeat; }
.tree.end { height: 10px; }
.expander { position: absolute; left: 3px; top: 3px; width: 10px; height: 10px; text-align: center; border: 1px solid #999; background: #e8e8e8; color: #000; font: 11px/9px "Liberation Sans", sans-serif; }

.preview { margin: 5px 0 0 1px; background: #000; height: 333px; flex: none; }
.preview svg { display: block; }
.pv-text text { font: 34px "Noto Sans CJK SC", sans-serif; fill: #fff; }
.pv-text text.tiny { font-size: 24px; }
.pv-text text.slant { font-size: 30px; fill: #7fa8d8; }
.pv-cyan text { font: 30px "Liberation Sans", sans-serif; fill: #0ff; }
.pv-cyan text.big { font-size: 52px; }
.rings { position: absolute; left: 0; top: 0; pointer-events: none; }
</style>
